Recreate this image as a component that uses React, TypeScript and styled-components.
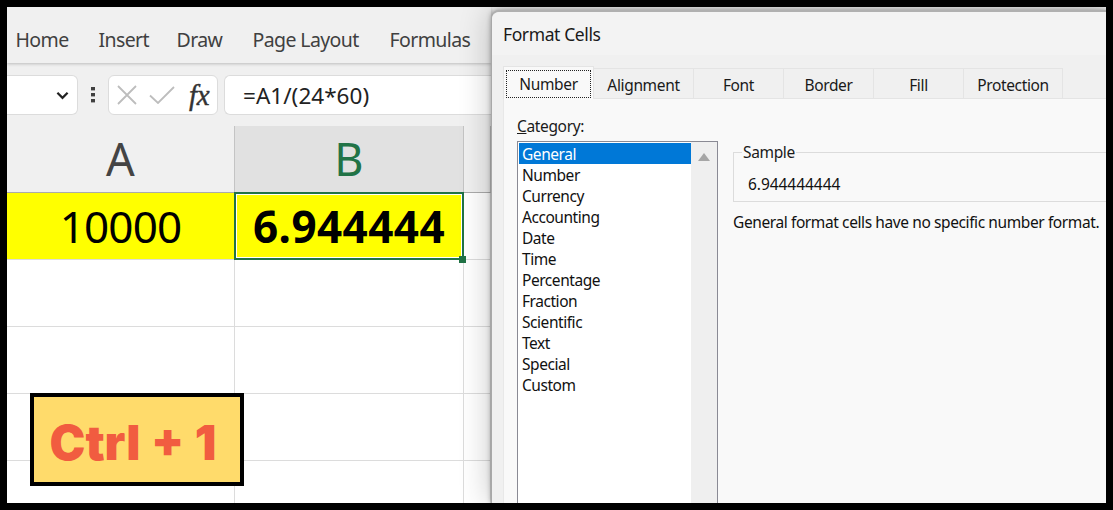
import React from "react";
import styled, { createGlobalStyle } from "styled-components";

const Global = createGlobalStyle`
  html, body { margin: 0; padding: 0; background: #000; }
  * { box-sizing: border-box; }
`;

const UI = `"Noto Sans", "Open Sans", sans-serif`;

const Frame = styled.div`
  position: relative;
  width: 1113px;
  height: 510px;
  border: 7px solid #000;
  background: #f0f0f0;
  display: flex;
  overflow: hidden;
  font-family: ${UI};
`;
const Excel = styled.div`
  width: 484px;
  flex: none;
  display: flex;
  flex-direction: column;
`;
const Ribbon = styled.nav`
  height: 56px;
  flex: none;
  display: flex;
  align-items: center;
  gap: 31px;
  padding: 9px 0 0 8.5px;
  background: #f0f0f0;
  box-shadow: 0 1px 3px rgba(0, 0, 0, 0.22);
  position: relative;
`;
const RibbonTab = styled.span<{ $w: number }>`
  font-size: 19.5px;
  color: #404040;
  width: ${(p) => p.$w}px;
  white-space: nowrap;
  letter-spacing: -0.6px;
`;
const FormulaBar = styled.div`
  height: 63px;
  flex: none;
  display: flex;
  align-items: center;
  padding-top: 1px;
`;
const Box = styled.div`
  height: 40px;
  background: #fff;
  border: 1px solid #dcdcdc;
  border-radius: 6px;
  display: flex;
  align-items: center;
`;
const NameBox = styled(Box)`
  width: 71px;
  border-left: 0;
  border-top-left-radius: 0;
  border-bottom-left-radius: 0;
  justify-content: flex-end;
  padding-right: 8px;
  flex: none;
`;
const Dots = styled.svg`
  width: 6px;
  height: 16px;
  margin: 0 12px 0 12px;
  flex: none;
`;
const FxBox = styled(Box)`
  width: 110px;
  flex: none;
  padding-left: 8px;
  gap: 12px;
`;
const Fx = styled.span`
  font-family: "Liberation Serif", serif;
  font-style: italic;
  font-weight: 400;
  font-size: 29px;
  color: #333;
  margin-left: 2px;
  letter-spacing: -0.3px;
  line-height: 1;
  -webkit-text-stroke: 0.4px #333;
`;
const FormulaInput = styled(Box)`
  flex: 1;
  margin-left: 6px;
  padding-left: 18px;
  border-right: 0;
  border-top-right-radius: 0;
  border-bottom-right-radius: 0;
  font-size: 22.5px;
  letter-spacing: 0.03px;
  color: #222;
  white-space: nowrap;
`;
const Sheet = styled.div`
  flex: 1;
  display: grid;
  grid-template-columns: 228px 229px 1fr;
  grid-template-rows: 67px repeat(5, 67px);
  background: #fff;
`;
const Header = styled.div<{ $active?: boolean }>`
  background: ${(p) => (p.$active ? "#e1e1e1" : "#f0f0f0")};
  color: ${(p) => (p.$active ? "#217346" : "#444")};
  border-bottom: 1px solid #ababab;
  border-right: 1px solid #c4c4c4;
  font-size: 45px;
  display: flex;
  align-items: center;
  justify-content: center;
  line-height: 1;
  padding-bottom: 2px;
`;
const Cell = styled.div<{ $fill?: boolean; $bold?: boolean; $selected?: boolean }>`
  position: relative;
  z-index: ${(p) => (p.$selected ? 1 : "auto")};
  background: ${(p) => (p.$fill ? "#ffff00" : "#fff")};
  border-right: 1px solid ${(p) => (p.$fill ? "#ffff00" : "#dcdcdc")};
  border-bottom: 1px solid #dcdcdc;
  display: flex;
  align-items: center;
  justify-content: center;
  color: #000;
  font-size: 44px;
  letter-spacing: ${(p) => (p.$bold ? "0.01em" : "-0.02em")};
  font-weight: ${(p) => (p.$bold ? 700 : 400)};
  line-height: 1;
  ${(p) =>
    p.$selected
      ? `
    &::before {
      content: "";
      position: absolute;
      inset: -1px -1px -1px -1px;
      border: 2px solid #217346;
      outline: 1px solid #fff;
      outline-offset: -3px;
    }
    &::after {
      content: "";
      position: absolute;
      right: -3px;
      bottom: -4px;
      width: 7px;
      height: 7px;
      background: #217346;
    }
  `
      : ""}
`;
const Badge = styled.div`
  position: absolute;
  left: 23px;
  top: 386px;
  width: 214px;
  height: 93px;
  border: 4px solid #000;
  background: #ffdb6b;
  color: #f15c40;
  font-family: Inter, sans-serif;
  font-weight: 900;
  font-size: 48px;
  letter-spacing: 0;
  word-spacing: 1px;
  display: flex;
  align-items: center;
  justify-content: center;
  white-space: pre;
  padding: 5px 8px 0 0;
`;
const Dialog = styled.section`
  flex: 1;
  margin-top: 3px;
  border-top: 2px solid #b0b0b0;
  border-left: 1px solid #a8a8a8;
  border-top-left-radius: 8px;
  background: #f0f0f0;
  display: flex;
  flex-direction: column;
  min-width: 0;
  position: relative;
  z-index: 2;
  box-shadow: 0 0 5px rgba(0, 0, 0, 0.35), 0 0 32px rgba(0, 0, 0, 0.24);
`;
const TitleBar = styled.header`
  height: 43px;
  flex: none;
  background: #f3f3f3;
  border-top-left-radius: 8px;
  display: flex;
  align-items: center;
  padding-left: 11px;
  font-size: 17.5px;
  letter-spacing: -0.4px;
  color: #1a1a1a;
`;
const Tabs = styled.div`
  height: 44px;
  flex: none;
  display: flex;
  align-items: flex-end;
  padding: 0 0 0 11px;
  position: relative;
`;
const Tab = styled.div<{ $w: number; $active?: boolean }>`
  width: ${(p) => p.$w}px;
  height: ${(p) => (p.$active ? 33 : 31)}px;
  flex: none;
  background: ${(p) => (p.$active ? "#f9f9f9" : "#f0f0f0")};
  border: 1px solid #e4e4e4;
  border-left-width: ${(p) => (p.$active ? 1 : 0)}px;
  border-bottom-width: ${(p) => (p.$active ? 0 : 1)}px;
  font-size: 15.5px;
  letter-spacing: -0.35px;
  color: #1a1a1a;
  display: flex;
  align-items: center;
  justify-content: center;
  padding: 3px 2px 0;
`;
const Focus = styled.span`
  flex: 1;
  align-self: stretch;
  margin: 0 0 1px;
  border: 1px dotted #222;
  display: flex;
  align-items: center;
  justify-content: center;
`;
const TabLine = styled.div`
  flex: 1;
  align-self: flex-end;
  height: 1px;
  background: #e4e4e4;
`;
const Panel = styled.div`
  flex: 1;
  margin-left: 11px;
  background: #f9f9f9;
  border-left: 1px solid #e8e8e8;
  padding: 16px 0 0 13px;
  display: flex;
  gap: 15px;
  min-height: 0;
`;
const CategoryCol = styled.div`
  width: 201px;
  flex: none;
  display: flex;
  flex-direction: column;
`;
const Label = styled.label`
  font-size: 15.5px;
  letter-spacing: -0.35px;
  color: #1a1a1a;
  height: 26px;
  line-height: 22px;
`;
const ListBox = styled.div`
  flex: 1;
  background: #fff;
  border: 1px solid #8a8a94;
  border-bottom: 0;
  display: flex;
  min-height: 0;
`;
const List = styled.ul`
  flex: 1;
  margin: 0;
  list-style: none;
  padding: 1px 0 0 1px;
`;
const Item = styled.li<{ $selected?: boolean }>`
  height: 21px;
  line-height: 22.5px;
  padding-left: 3px;
  font-size: 15.5px;
  letter-spacing: -0.45px;
  background: ${(p) => (p.$selected ? "#0078d7" : "transparent")};
  color: ${(p) => (p.$selected ? "#fff" : "#111")};
`;
const Scroll = styled.div`
  width: 26px;
  flex: none;
  background: #efefef;
  display: flex;
  justify-content: center;
  padding-top: 11px;
`;
const ScrollArrow = styled.svg`
  width: 12px;
  height: 8px;
`;
const Right = styled.div`
  flex: 1;
  min-width: 0;
  padding-top: 37px;
`;
const Fieldset = styled.fieldset`
  margin: 0 -20px 0 0;
  padding: 0 0 0 14px;
  height: 58px;
  border: 1px solid #dcdcdc;
  border-right: 0;
  position: relative;
  top: -8px;
`;
const Legend = styled.legend`
  padding: 0 1px;
  margin-left: -6px;
  font-size: 15.5px;
  letter-spacing: -0.35px;
  color: #1a1a1a;
  line-height: 16px;
`;
const SampleValue = styled.div`
  font-size: 15.5px;
  letter-spacing: -0.05px;
  color: #111;
  margin-top: 13px;
  line-height: 22px;
`;
const Description = styled.p`
  margin: 1px 0 0;
  font-size: 15.5px;
  letter-spacing: -0.4px;
  color: #111;
  line-height: 22px;
  white-space: nowrap;
`;

const tabs = [
  { t: "Alignment", w: 100 },
  { t: "Font", w: 90 },
  { t: "Border", w: 90 },
  { t: "Fill", w: 90 },
  { t: "Protection", w: 99 },
];
const cats = ["General", "Number", "Currency", "Accounting", "Date", "Time", "Percentage", "Fraction", "Scientific", "Text", "Special", "Custom"];

export default function App() {
  return (
    <>
      <Global />
      <Frame>
        <Excel>
          <Ribbon>
            <RibbonTab $w={52}>Home</RibbonTab>
            <RibbonTab $w={47}>Insert</RibbonTab>
            <RibbonTab $w={45}>Draw</RibbonTab>
            <RibbonTab $w={106}>Page Layout</RibbonTab>
            <RibbonTab $w={80}>Formulas</RibbonTab>
          </Ribbon>
          <FormulaBar>
            <NameBox>
              <svg width="13" height="9" viewBox="0 0 14 9">
                <path d="M1.5 1.5 7 7l5.5-5.5" fill="none" stroke="#222" strokeWidth="2.4" />
              </svg>
            </NameBox>
            <Dots viewBox="0 0 6 16">
              <rect x="1" y="0" width="4" height="3.4" fill="#404040" />
              <rect x="1" y="6" width="4" height="3.4" fill="#404040" />
              <rect x="1" y="12" width="4" height="3.4" fill="#404040" />
            </Dots>
            <FxBox>
              <svg width="20" height="20" viewBox="0 0 20 20">
                <path d="M1 1l18 18M19 1 1 19" stroke="#bdbdbd" strokeWidth="1.8" fill="none" />
              </svg>
              <svg width="26" height="18" viewBox="0 0 26 18">
                <path d="M1 9.5 9 17 25 1" stroke="#bdbdbd" strokeWidth="1.8" fill="none" />
              </svg>
              <Fx>fx</Fx>
            </FxBox>
            <FormulaInput>=A1/(24*60)</FormulaInput>
          </FormulaBar>
          <Sheet>
            <Header>A</Header>
            <Header $active>B</Header>
            <Header />
            <Cell $fill>10000</Cell>
            <Cell $fill $bold $selected>6.944444</Cell>
            <Cell />
            {Array.from({ length: 12 }).map((_, i) => (
              <Cell key={i} />
            ))}
          </Sheet>
        </Excel>
        <Dialog>
          <TitleBar>Format Cells</TitleBar>
          <Tabs>
            <Tab $w={91} $active>
              <Focus>Number</Focus>
            </Tab>
            {tabs.map((t) => (
              <Tab key={t.t} $w={t.w}>{t.t}</Tab>
            ))}
            <TabLine />
          </Tabs>
          <Panel>
            <CategoryCol>
              <Label><u>C</u>ategory:</Label>
              <ListBox>
                <List>
                  {cats.map((c, i) => (
                    <Item key={c} $selected={i === 0}>{c}</Item>
                  ))}
                </List>
                <Scroll>
                  <ScrollArrow viewBox="0 0 12 8">
                    <path d="M6 0l6 8H0z" fill="#a6a6a6" />
                  </ScrollArrow>
                </Scroll>
              </ListBox>
            </CategoryCol>
            <Right>
              <Fieldset>
                <Legend>Sample</Legend>
                <SampleValue>6.944444444</SampleValue>
              </Fieldset>
              <Description>General format cells have no specific number format.</Description>
            </Right>
          </Panel>
        </Dialog>
        <Badge>Ctrl + 1</Badge>
      </Frame>
    </>
  );
}
